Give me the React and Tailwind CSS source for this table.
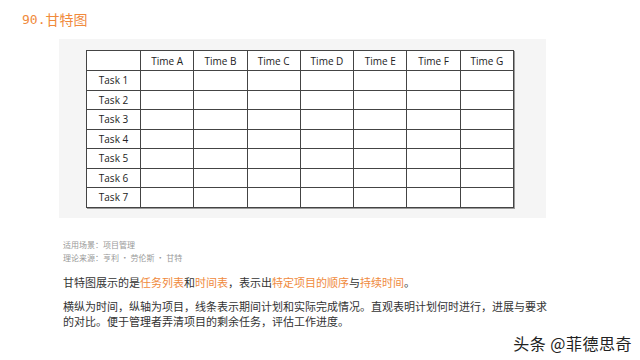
const times = ['Time A', 'Time B', 'Time C', 'Time D', 'Time E', 'Time F', 'Time G'];
const tasks = ['Task 1', 'Task 2', 'Task 3', 'Task 4', 'Task 5', 'Task 6', 'Task 7'];

const cjk = { fontFamily: '"Noto Sans CJK SC", "Noto Sans", sans-serif' };

function Hl({ children }) {
  return <span className="text-[#f08a3c]">{children}</span>;
}

export default function App() {
  return (
    <div className="relative w-[640px] h-[360px] bg-white overflow-hidden" style={cjk}>
      <div className="h-[39px] flex items-center pl-[22px] text-[14px] text-[#f08a3c]">
        <span style={{ fontFamily: '"DejaVu Sans Mono", monospace' }} className="text-[13px]">90.</span>
        <span>甘特图</span>
      </div>

      <div className="ml-[59px] w-[487px] h-[179px] bg-[#f5f5f5] pl-[27px] pt-[11px]">
        <table
          className="table-fixed border-collapse w-[428px] bg-white text-[10px] text-[#222] shadow-[1px_1px_0_#9a9a9a]"
          style={{ fontFamily: '"Open Sans", sans-serif' }}
        >
          <thead>
            <tr className="h-[20px]">
              <th className="w-[54px] border border-[#444] font-normal"></th>
              {times.map((t) => (
                <th key={t} className="border border-[#444] font-normal leading-none">{t}</th>
              ))}
            </tr>
          </thead>
          <tbody>
            {tasks.map((task) => (
              <tr key={task} className="h-[19.5px]">
                <td className="border border-[#444] text-center leading-none">{task}</td>
                {times.map((t) => (
                  <td key={t} className="border border-[#444]"></td>
                ))}
              </tr>
            ))}
          </tbody>
        </table>
      </div>

      <div className="pl-[63px] mt-[20px] text-[8px] leading-[13px] text-[#999]">
        <div>适用场景：项目管理</div>
        <div>理论来源：亨利 · 劳伦斯 · 甘特</div>
      </div>

      <div className="pl-[63px] mt-[11px] text-[11px] leading-[15px] text-[#333]">
        <p>
          甘特图展示的是<Hl>任务列表</Hl>和<Hl>时间表</Hl>，表示出<Hl>特定项目的顺序</Hl>与<Hl>持续时间</Hl>。
        </p>
        <p className="mt-[9px] w-[484px]">
          横纵为时间，纵轴为项目，线条表示期间计划和实际完成情况。直观表明计划何时进行，进展与要求的对比。便于管理者弄清项目的剩余任务，评估工作进度。
        </p>
      </div>

      <div className="absolute right-[8px] bottom-[9px] text-[16px] tracking-[0.5px] text-[#222] leading-none">
        头条 @菲德思奇
      </div>
    </div>
  );
}
